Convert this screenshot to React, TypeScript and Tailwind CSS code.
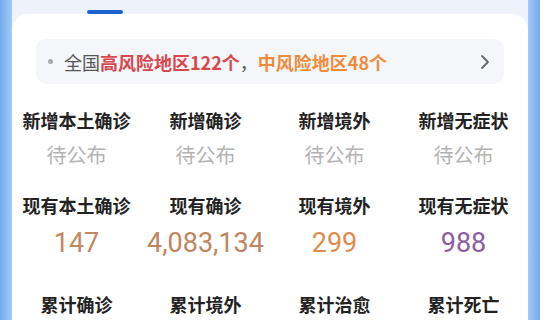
import React from 'react';

const font = { fontFamily: '"Noto Sans CJK SC", "Noto Sans", sans-serif' };
const numFont = { fontFamily: 'Roboto, "Noto Sans", sans-serif' };

type Cell = { label: string; value: string; color: string };

const rows: { cells: Cell[]; big: boolean; gap: string }[] = [
  {
    big: false,
    gap: 'mt-[24px]',
    cells: [
      { label: '新增本土确诊', value: '待公布', color: 'text-[#b3b3b3]' },
      { label: '新增确诊', value: '待公布', color: 'text-[#b3b3b3]' },
      { label: '新增境外', value: '待公布', color: 'text-[#b3b3b3]' },
      { label: '新增无症状', value: '待公布', color: 'text-[#b3b3b3]' },
    ],
  },
  {
    big: true,
    gap: 'mt-[24px]',
    cells: [
      { label: '现有本土确诊', value: '147', color: 'text-[#c4875e]' },
      { label: '现有确诊', value: '4,083,134', color: 'text-[#c08560]' },
      { label: '现有境外', value: '299', color: 'text-[#e08a4c]' },
      { label: '现有无症状', value: '988', color: 'text-[#8b5c9f]' },
    ],
  },
  {
    big: true,
    gap: 'mt-[32px]',
    cells: [
      { label: '累计确诊', value: '', color: 'text-[#c2474d]' },
      { label: '累计境外', value: '', color: 'text-[#e38c4d]' },
      { label: '累计治愈', value: '', color: 'text-[#4aa47a]' },
      { label: '累计死亡', value: '', color: 'text-[#555]' },
    ],
  },
];

export default function App() {
  return (
    <div className="w-[540px] h-[320px] overflow-hidden flex bg-[#eef3fb]" style={font}>
      {/* side strips */}
      <div className="w-[12px] h-full bg-gradient-to-r from-[#72aaef] to-[#a3caf6]" />
      <div className="flex-1 flex flex-col">
        <div className="h-[15px] pt-[10px] pl-[75px]">
          <div className="w-[36px] h-[4px] rounded-full bg-[#1d62d1]" />
        </div>
        <div className="flex-1 bg-white rounded-t-[16px] pt-[25px]">
          {/* risk banner */}
          <div className="mx-[24px] h-[45px] rounded-[10px] bg-[#f4f6f9] flex items-center pl-[12px] pr-[14px]">
            <span className="w-[5px] h-[5px] rounded-full bg-[#a9adb3] mr-[11px]" />
            <span className="text-[18px] leading-none text-[#555]">
              全国<span className="text-[#d9464c] font-semibold">高风险地区122个</span>，
              <span className="text-[#ef8b3b] font-semibold">中风险地区48个</span>
            </span>
            <svg className="ml-auto" width="10" height="16" viewBox="0 0 10 16" fill="none">
              <path d="M2 2l6 6-6 6" stroke="#666" strokeWidth="1.8" strokeLinecap="round" strokeLinejoin="round" />
            </svg>
          </div>

          {rows.map((row, i) => (
            <div key={i} className={`grid grid-cols-4 text-center ${row.gap}`}>
              {row.cells.map((c) => (
                <div key={c.label} className="flex flex-col items-center">
                  <div className="text-[18px] leading-[24px] font-bold text-[#222]">{c.label}</div>
                  {row.big ? (
                    <div className={`mt-[9px] text-[27px] leading-[34px] ${c.color}`} style={numFont}>
                      {c.value}
                    </div>
                  ) : (
                    <div className={`mt-[9px] text-[20px] leading-[28px] ${c.color}`}>{c.value}</div>
                  )}
                </div>
              ))}
            </div>
          ))}
        </div>
      </div>
      <div className="w-[12px] h-full bg-gradient-to-l from-[#72aaef] to-[#a3caf6]" />
    </div>
  );
}
